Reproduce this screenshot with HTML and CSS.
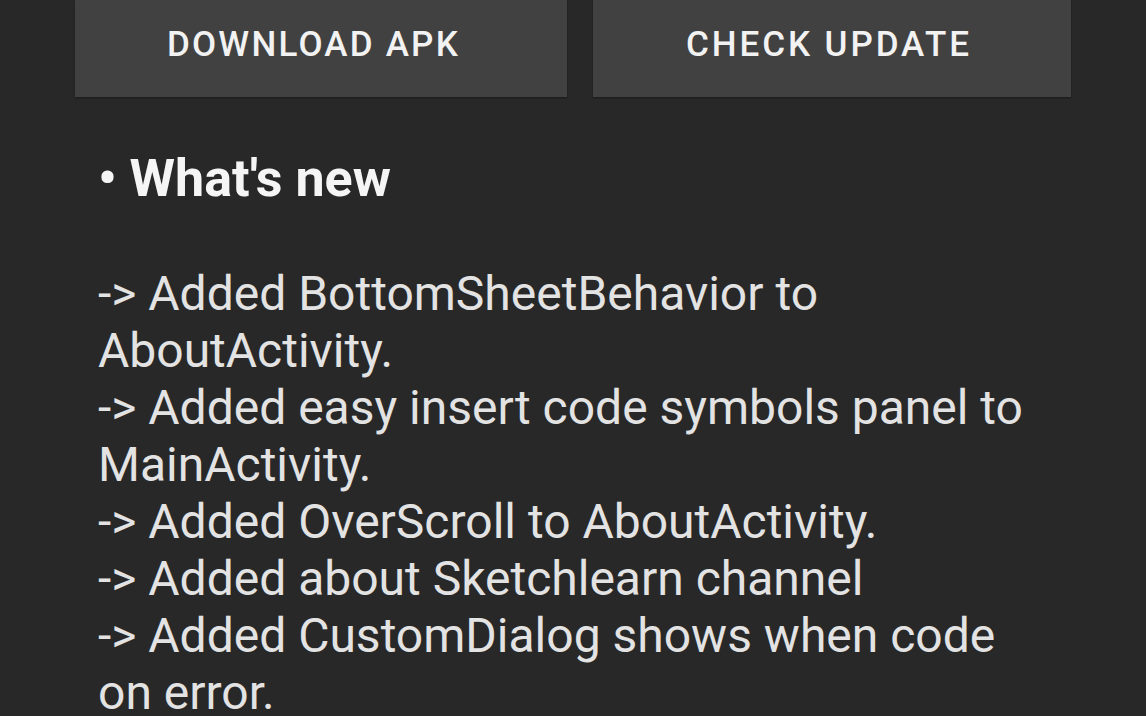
FILE: index.html
```html
<!DOCTYPE html>
<html>
<head>
<meta charset="utf-8">
<link rel="stylesheet" href="styles.css">
</head>
<body>
<div class="page">
  <div class="actions">
    <div class="btn btn-left">DOWNLOAD APK</div>
    <div class="btn btn-right">CHECK UPDATE</div>
  </div>
  <div class="content">
    <h2 class="heading">• What's new</h2>
    <p class="notes">-&gt; Added BottomSheetBehavior to<br>AboutActivity.<br>-&gt; Added easy insert code symbols panel to<br>MainActivity.<br>-&gt; Added OverScroll to AboutActivity.<br>-&gt; Added about Sketchlearn channel<br>-&gt; Added CustomDialog shows when code<br>on error.</p>
  </div>
</div>
</body>
</html>
```
FILE: styles.css
```css
html, body {
  margin: 0;
  padding: 0;
  background: #282828;
  overflow: hidden;
}
.page {
  width: 1146px;
  height: 716px;
  font-family: Roboto, "Liberation Sans", sans-serif;
  color: #e6e6e6;
}
.actions {
  display: grid;
  grid-template-columns: 492px 478px;
  column-gap: 26px;
  padding-left: 75px;
}
.btn {
  height: 88px;
  padding-bottom: 9px;
  background: #414141;
  display: flex;
  align-items: center;
  justify-content: center;
  font-weight: 500;
  font-size: 35px;
  letter-spacing: 2.2px;
  color: #f2f2f2;
  box-shadow: 0 1px 2px rgba(0,0,0,0.35);
}
.btn-left {
  padding-right: 15px;
}
.btn-right {
  padding-right: 6px;
  letter-spacing: 2.9px;
}
.content {
  padding-left: 98px;
}
.heading {
  margin: 52px 0 0 0;
  font-size: 52px;
  font-weight: 700;
  line-height: 60px;
  color: #f5f5f5;
}
.notes {
  margin: 56px 0 0 0;
  font-size: 48px;
  line-height: 57px;
  color: #e3e3e3;
  white-space: nowrap;
}
```
